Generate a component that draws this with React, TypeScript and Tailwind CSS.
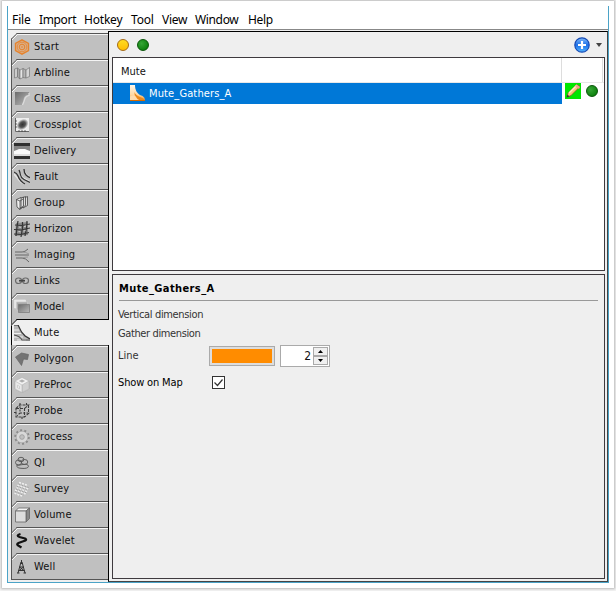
import { useState } from "react";
import type { ReactNode } from "react";

const menu = [
  { label: "File", width: "w-[27px]", spacing: "tracking-[-0.1px]" },
  { label: "Import", width: "w-[45px]", spacing: "tracking-[-0.35px]" },
  { label: "Hotkey", width: "w-[47px]", spacing: "tracking-[-0.2px]" },
  { label: "Tool", width: "w-[31px]", spacing: "tracking-[-0.2px]" },
  { label: "View", width: "w-[33px]", spacing: "tracking-[-0.3px]" },
  { label: "Window", width: "w-[53px]", spacing: "tracking-[-0.35px]" },
  { label: "Help", width: "w-[40px]", spacing: "tracking-[-0.3px]" },
];

const tabs: { name: string; icon: ReactNode }[] = [
  {
    name: "Start",
    icon: (
      <g fill="none" stroke="#e5832d">
        <path d="M8 .8 14.500 4.400v7.200L8 15.200 1.500 11.600V4.400Z" fill="#dcae86" strokeWidth="1.400" />
        <circle cx="8" cy="8" r="4.800" stroke="#e08a40" strokeWidth=".9" />
        <circle cx="8" cy="8" r="2.800" strokeWidth="1" />
        <circle cx="8" cy="8" r=".8" fill="#e5832d" stroke="none" />
      </g>
    ),
  },
  {
    name: "Arbline",
    icon: (
      <g stroke="#777" strokeWidth=".7">
        <path d="M.5 4 3.500 3v9L.5 13Z" fill="#ccc" />
        <path d="M3.500 3 6 5v9l-2.500-2Z" fill="#aaa" />
        <path d="M6 5 9 3.500v9L6 14Z" fill="#e5e5e5" />
        <path d="M9 3.500 12 5v8l-3-.5Z" fill="#b5b5b5" />
        <path d="M12 5 15.500 2.500v9L12 13Z" fill="#d5d5d5" />
      </g>
    ),
  },
  {
    name: "Class",
    icon: (
      <g>
        <path d="M1 1h14v3c-4 0-5 2-5.500 5L8 14H1Z" fill="url(#darkFade)" />
        <path d="M15 2v2.500c-4 .5-4 3-5 6L8.500 14" fill="none" stroke="#ddd" strokeWidth="1.200" />
      </g>
    ),
  },
  {
    name: "Crossplot",
    icon: (
      <g>
        <path d="M1 1h14v14H1Z" fill="#eee" />
        <ellipse cx="8.500" cy="7.500" rx="6.500" ry="5" transform="rotate(-40 8.500 7.500)" fill="url(#blob)" />
        <path d="M1.500 1v13.500H15M1 4h2M1 7h2M1 10h2M5 13v2M8 13v2M11 13v2" fill="none" stroke="#444" strokeWidth=".8" />
      </g>
    ),
  },
  {
    name: "Delivery",
    icon: (
      <g>
        <path d="M0 0h16v16H0Z" fill="#303030" />
        <path d="M0 3h16v5H0Z" fill="#858585" />
        <path d="M0 9V8q3-1 5-2h6q2 1 5 2v5H0Z" fill="#fafafa" />
        <path d="M0 11h16v2H0Z" fill="#ddd" />
      </g>
    ),
  },
  {
    name: "Fault",
    icon: (
      <g fill="none">
        <path d="M0 5q3 3 5 6t6 4M6 4q1 5 5 6l5 3M11 3q1 4 5 5" stroke="#e5e5e5" strokeWidth="1.600" />
        <path d="M0 3q3 1 4 4t3 5 4 3M5 1q1 2 1.500 5t3.500 4.500 6 3M10 0q0 4 2 6t4 2.500" stroke="#333" strokeWidth="1.300" />
      </g>
    ),
  },
  {
    name: "Group",
    icon: (
      <g fill="#ddd" stroke="#444" strokeWidth=".8">
        <path d="m9 3.500 4.500-2v9L9 13Z" />
        <path d="m7 3.500 4.500-2v9L7 13.500Z" />
        <path d="m5 4 4.500-2v9L5 14Z" />
        <path d="M2.500 4.500 7 2.500v9L6 14.500l-3-2.500Z" fill="#f0f0f0" />
        <path d="M2.500 4.500 6 6v8.500M6 6l3-2" fill="none" />
      </g>
    ),
  },
  {
    name: "Horizon",
    icon: (
      <g fill="none" stroke="#353535" strokeWidth="1.200">
        <path d="M2 2 14 1v13L1 15Z" fill="#8a8a8a" stroke="none" />
        <path d="M4 0 3 6l-1 9M8.500 1v6l-1.500 9M13 0l-.5 7-1.500 8M1 4l7 .5L16 3M0 8.500l7 .5 9-2M0 13l7 .5 8-2" />
        <path d="m5 6 2 .3M10 5.500l2-.5M4.500 10.500l2 .3M9.500 10l2-.4" stroke="#ddd" strokeWidth=".9" />
      </g>
    ),
  },
  {
    name: "Imaging",
    icon: (
      <g fill="none" strokeWidth="1">
        <path d="M1 5h7q3 0 6-3M1 8h14M2 11h6q4 0 7 4" stroke="#666" />
        <path d="M8 5q4 0 7 2M8 11q3-1 6-1" stroke="#999" />
      </g>
    ),
  },
  {
    name: "Links",
    icon: (
      <g fill="none" stroke="#6a6a6a" strokeWidth="1.200">
        <rect x="1.500" y="5" width="6" height="5.500" rx="2.700" />
        <rect x="8.500" y="5" width="6" height="5.500" rx="2.700" />
        <path d="M5 7.700h6" stroke="#444" strokeWidth="1.700" />
      </g>
    ),
  },
  {
    name: "Model",
    icon: (
      <g strokeWidth=".7">
        <path d="M.5 1h11v8H.5Z" fill="#e6e6e6" stroke="#e9e9e9" />
        <path d="M2.500 3h11v8h-11Z" fill="#aaa" stroke="#ccc" />
        <path d="M4.500 5.500h11v8h-11Z" fill="url(#darkFade)" stroke="#777" />
      </g>
    ),
  },
  {
    name: "Mute",
    icon: (
      <g>
        <path d="M0 0h4l4 8 8 5v3H0Z" fill="#b8b8b8" />
        <path d="M0 5h5M0 8.500h7M0 12h9M3 15h9" fill="none" stroke="#eee" />
        <path d="M0 0h4l3.500 7L11 11l5 3" fill="none" stroke="#333" strokeWidth="1.200" />
        <path d="M0 10q6 1 8 5h8" fill="none" stroke="#555" strokeWidth="1.200" />
      </g>
    ),
  },
  {
    name: "Polygon",
    icon: <path d="m1.500 6 6-4 7 1.500-1 5-4-.5-2 6.500Z" fill="#747474" stroke="#646464" strokeWidth=".7" />,
  },
  {
    name: "PreProc",
    icon: (
      <g stroke="#aaa" strokeWidth=".5">
        <path d="m8 .5 7 3.500v8l-7 3.500L1 12V4Z" fill="#f2f2f2" />
        <path d="m8 8 7-4v8l-7 3.500Z" fill="#cfcfcf" />
        <path d="M8 8 1 4v8l7 3.500Z" fill="#e8e8e8" />
        <path d="m5.500 4 2.500-1.200L10.500 4 8 5.300Z" fill="#aaa" />
        <path d="m3.500 8.500 2 1v2l-2-1Z" fill="#fff" />
      </g>
    ),
  },
  {
    name: "Probe",
    icon: (
      <g fill="none" stroke="#3c3c3c" strokeWidth="1.100">
        <path d="M2 5.500h8.500v8.500H2ZM2 5.500 5.500 2h9l-4 3.500M14.500 2v8.500l-4 3.500" strokeDasharray="3 1" />
        <path d="M6 0v9.500M6 10h10M6 10l-3 3M0 9.500h3M12.500 0v3M8 14v2" strokeDasharray="2 1.200" />
      </g>
    ),
  },
  {
    name: "Process",
    icon: (
      <g fill="none">
        <circle cx="8" cy="8" r="6.700" stroke="#8b8b8b" strokeWidth="2.200" strokeDasharray="2 2.210" />
        <circle cx="8" cy="8" r="4.200" stroke="#d8d8d8" strokeWidth="3.300" />
        <circle cx="8" cy="8" r="5.800" stroke="#999" strokeWidth=".5" />
        <circle cx="8" cy="8" r="2.300" fill="#c0c0c0" stroke="#999" strokeWidth=".7" />
      </g>
    ),
  },
  {
    name: "QI",
    icon: (
      <g fill="none" stroke="#555" strokeWidth=".9">
        <ellipse cx="7" cy="4.500" rx="3" ry="2.200" />
        <ellipse cx="4.500" cy="7.500" rx="3" ry="2.500" />
        <ellipse cx="10.500" cy="7" rx="3.300" ry="2.500" />
        <path d="M3 10q-1 3 4 3.300 7 .7 7.500-2Q14 8.500 9 9.500T3 10Z" />
      </g>
    ),
  },
  {
    name: "Survey",
    icon: (
      <g fill="none">
        <path
          d="m5 1.500 9 3M3.500 4l11 4M2.500 6.500l11 4M1 9l11 4M.5 12 8 15"
          stroke="#eee"
          strokeWidth="1.700"
          strokeDasharray="2 1.100"
        />
        <path
          d="m4.500 3 10 3.500M3 5.500l11 4M2 8l11 4M1 10.700l9 3.500"
          stroke="#8b8b8b"
          strokeWidth=".7"
          strokeDasharray="1.500 1.600"
        />
      </g>
    ),
  },
  {
    name: "Volume",
    icon: (
      <g stroke="#666" strokeWidth=".8">
        <path d="M1.500 4 4.500 1h11L12 4Z" fill="#f4f4f4" />
        <path d="M12 4l3.500-3v10.500L12 15Z" fill="#888" />
        <path d="M1.500 4H12v11H1.500Z" fill="#ddd" />
      </g>
    ),
  },
  {
    name: "Wavelet",
    icon: (
      <path
        d="M6.500 1C3 2 3 3 5.500 4l5.500 1.500c2 1 1 2-1 2.500l-5.500 2C2.500 11 3 12 5 13l2.500 1.500"
        fill="none"
        stroke="#111"
        strokeWidth="2.200"
      />
    ),
  },
  {
    name: "Well",
    icon: (
      <path
        d="M7.500 1v3M6.500 4.500h2M7 3 4 14M8 3l3 11M5.500 8h4M4.500 11.500h6M3 14h2.500M9.500 14H12M5.500 8l5 4M9.500 8l-5 4"
        fill="none"
        stroke="#333"
        strokeWidth="1"
      />
    ),
  },
];

const Gradients = () => (
  <svg className="absolute size-0" aria-hidden="true">
    <defs>
      <linearGradient id="darkFade" x1="0" y1="0" x2="1" y2="1">
        <stop offset="0" stopColor="#6c6c6c" />
        <stop offset="1" stopColor="#bbb" />
      </linearGradient>
      <radialGradient id="blob">
        <stop offset="0" stopColor="#333" />
        <stop offset=".5" stopColor="#555" />
        <stop offset="1" stopColor="#eee" />
      </radialGradient>
      <linearGradient id="boot" x1="0" y1="0" x2="0" y2="1">
        <stop offset="0" stopColor="#fff6e8" />
        <stop offset=".6" stopColor="#ffd9a4" />
        <stop offset="1" stopColor="#f08a1c" />
      </linearGradient>
      <linearGradient id="blueBall" x1="0" y1="0" x2="0" y2="1">
        <stop offset="0" stopColor="#83bdfa" />
        <stop offset=".5" stopColor="#1c6fe8" />
        <stop offset="1" stopColor="#54b6ff" />
      </linearGradient>
    </defs>
  </svg>
);

const Tab = ({ name, icon, active, onClick }: { name: string; icon: ReactNode; active: boolean; onClick: () => void }) => (
  <button
    type="button"
    onClick={onClick}
    className={
      active
        ? "relative flex h-[26px] w-[98px] items-center border-t border-l border-black bg-[#efefef] pl-[2px] text-left"
        : "relative flex h-[26px] w-[97px] items-center border-t border-l border-[#555] bg-[#c0c0c0] pl-[2px] text-left shadow-[inset_0_1px_0_#f4f4f4]"
    }
  >
    <svg className="absolute -top-px -left-px" width="7" height="7" viewBox="0 0 7 7">
      <path d="M0 0h6L0 6Z" fill={name === "Start" ? "#efefef" : "#c0c0c0"} />
      <path d="M0 6.500 6.500 0" stroke={active ? "#000" : "#555"} />
      {!active && <path d="M1 7 7 1" stroke="#f8f8f8" />}
      {name !== "Start" && <path d="M.5 0v7" stroke="#555" />}
    </svg>
    <svg width="16" height="16" viewBox="0 0 16 16" className="mt-px">
      {icon}
    </svg>
    <span className="ml-1 leading-[14px] tracking-[0.15px]">{name}</span>
  </button>
);

const Ball = ({ color }: { color: "yellow" | "green" }) => (
  <span
    className={
      color === "yellow"
        ? "size-3 rounded-full border border-[#a66a12] bg-linear-to-b from-[#ffdc20] to-[#ffbd00]"
        : "size-3 rounded-full border border-[#075507] bg-radial-[at_35%_35%] from-[#35a535] to-[#007500]"
    }
  />
);

const App = () => {
  const [selected, setSelected] = useState("Mute");
  const [lineWidth, setLineWidth] = useState(2);
  const [showOnMap, setShowOnMap] = useState(true);

  return (
    <div className="h-[591px] w-[616px] overflow-hidden bg-[#f3f3f3] pt-px pl-[2px] text-[11px] text-[#111]">
      <Gradients />
      <div className="h-[587px] w-[612px] bg-white pt-[5px] pl-[5px] shadow-[0_0_2px_1px_#bbb]">
        <div className="flex h-[577px] w-[602px] flex-col border-x border-b border-[#4ba3c7] bg-[#efefef]">
          <nav className="flex h-6 shrink-0 items-center border-b border-[#888] bg-white pt-[5px] pl-1 font-['Noto_Sans',sans-serif] text-[12px] text-black">
            {menu.map((item) => (
              <span key={item.label} className={`${item.width} ${item.spacing} whitespace-nowrap`}>
                {item.label}
              </span>
            ))}
          </nav>

          <div className="flex min-h-0 flex-1 pt-px font-['DejaVu_Sans_Condensed','DejaVu_Sans',sans-serif] font-stretch-condensed">
            <div className="z-10 flex w-[101px] shrink-0 flex-col pt-[2px] pl-[3px]">
              {tabs.map((tab) => (
                <Tab
                  key={tab.name}
                  name={tab.name}
                  icon={tab.icon}
                  active={tab.name === selected}
                  onClick={() => setSelected(tab.name)}
                />
              ))}
              <div className="h-px w-[97px] bg-[#555]" />
            </div>

            <div className="-ml-px flex min-w-0 flex-1 flex-col border border-black border-r-[#444] border-b-[#444] pl-[3px]">
              <div className="flex h-[25px] items-center gap-2 pt-[1px] pr-[5px] pl-[5px]">
                <Ball color="yellow" />
                <Ball color="green" />
                <svg className="ml-auto" width="16" height="16" viewBox="0 0 16 16">
                  <circle cx="8" cy="8" r="7.200" fill="url(#blueBall)" stroke="#164ab5" strokeWidth="1.200" />
                  <path d="M8 4v8M4 8h8" stroke="#fff" strokeWidth="2.200" />
                </svg>
                <svg className="-ml-[2px]" width="6" height="4" viewBox="0 0 6 4">
                  <path d="M0 0h6L3 4Z" fill="#444" />
                </svg>
              </div>

              <div className="h-[214px] w-[493px] shrink-0 border border-[#3e3a3e] bg-white">
                <div className="flex h-[25px] border-b border-[#e8e8e8]">
                  <div className="w-[449px] border-r border-[#ddd] pt-[7px] pl-[8px] leading-[14px]">Mute</div>
                  <div className="w-[41px] border-r border-[#ddd]" />
                </div>
                <div className="flex h-[21px]">
                  <div className="flex w-[449px] items-center bg-[#0078d7] pl-4 text-white">
                    <svg width="17" height="17" viewBox="0 0 17 17">
                      <path d="M1 0h5c0 5 2 8 5 10 3 1 5 2 5 6H1Z" fill="url(#boot)" />
                      <path d="M5.500 7q1 3 5.500 5 4 1 5 4H6Z" fill="#ed8a1c" />
                      <path d="M1 11.500q3-2 5-1 2 4 5 5H1Z" fill="#ffdcae" />
                      <path d="M1 15.500h15" stroke="#d96b00" />
                    </svg>
                    <span className="ml-[3px] leading-[14px] tracking-[0.13px]">Mute_Gathers_A</span>
                  </div>
                  <div className="flex items-start">
                    <svg className="ml-[3px]" width="16" height="16" viewBox="0 0 16 16">
                      <path d="M0 0h16v16H0Z" fill="#00e600" />
                      <path d="m2 14 1-4 8.500-8.500 3.500 2-9 9Z" fill="#f7c77c" stroke="#94512a" strokeWidth=".7" />
                      <path d="m4 10 8-8" stroke="#fff0c9" strokeWidth="1.500" />
                      <path d="m11 2 4 2-1 2-4-3Z" fill="#f0a090" />
                      <path d="m1.500 14.500 1-3 2 2Z" fill="#333" />
                    </svg>
                    <div className="mt-[2px] ml-[5px] flex">
                      <Ball color="green" />
                    </div>
                  </div>
                </div>
              </div>

              <div className="mt-[3px] h-[305px] w-[493px] shrink-0 border border-[#3e3a3e] px-[6px] text-[#333]">
                <div className="h-[26px] border-b border-[#999] pt-[7px] leading-[14px] font-bold tracking-[0.4px] text-black">
                  Mute_Gathers_A
                </div>
                <div className="-ml-px pt-[7px] leading-[14px] tracking-[-0.35px]">Vertical dimension</div>
                <div className="-ml-px pt-[5px] leading-[14px] tracking-[-0.38px]">Gather dimension</div>
                <div className="mt-[4px] flex h-[22px] items-center">
                  <span className="-ml-px w-[91px] pt-px">Line</span>
                  <div className="h-5 w-[66px] border border-[#aaa] bg-[#ddd] p-[2px]">
                    <div className="h-full bg-[#ff8c00]" />
                  </div>
                  <div className="ml-[5px] flex h-[22px] w-[50px] border border-[#aaa] bg-white p-px">
                    <span className="flex-1 pr-[2px] text-right text-[12px] leading-[19px] text-[#111]">{lineWidth}</span>
                    <div className="flex w-[15px] flex-col">
                      <button
                        type="button"
                        className="flex h-[9px] items-center justify-center border border-[#aaa] bg-[#f0f0f0]"
                        onClick={() => setLineWidth(lineWidth + 1)}
                      >
                        <svg width="5" height="3" viewBox="0 0 5 3">
                          <path d="M0 3h5L2.500 0Z" />
                        </svg>
                      </button>
                      <button
                        type="button"
                        className="flex h-[9px] items-center justify-center border border-[#aaa] bg-[#f0f0f0]"
                        onClick={() => setLineWidth(Math.max(0, lineWidth - 1))}
                      >
                        <svg width="5" height="3" viewBox="0 0 5 3">
                          <path d="M0 0h5L2.500 3Z" />
                        </svg>
                      </button>
                    </div>
                  </div>
                </div>
                <div className="mt-[8px] flex items-center text-black">
                  <span className="-ml-px w-[94px] pt-px leading-[14px] tracking-[-0.15px]">Show on Map</span>
                  <button
                    type="button"
                    className="flex size-[13px] items-center justify-center border border-[#333] bg-white"
                    onClick={() => setShowOnMap(!showOnMap)}
                  >
                    {showOnMap && (
                      <svg width="11" height="11" viewBox="0 0 11 11">
                        <path d="m1.500 5.500 3 3 5-6" fill="none" stroke="#333" strokeWidth="1.200" />
                      </svg>
                    )}
                  </button>
                </div>
              </div>
            </div>
          </div>
        </div>
      </div>
    </div>
  );
};

export default App;
